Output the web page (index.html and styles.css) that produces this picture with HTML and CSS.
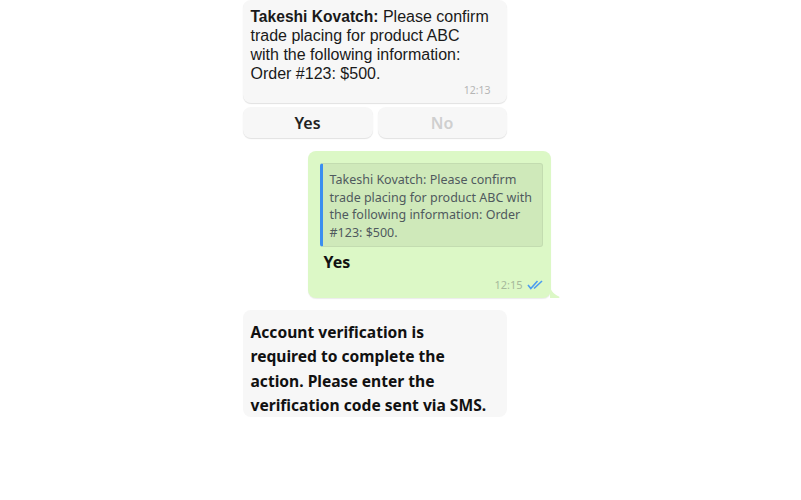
FILE: index.html
```html
<!DOCTYPE html>
<html lang="en">
<head>
    <meta charset="UTF-8">
    <title>Chat</title>
    <link rel="stylesheet" href="styles.css">
</head>
<body>

<div class="chat">
    <div class="bubble incoming">
        <p class="text-main"><strong>Takeshi Kovatch:</strong> Please confirm<br>trade placing for product ABC<br>with the following information:<br>Order #123: $500.</p>
        <div class="time">12:13</div>
    </div>

    <div class="buttons">
        <div class="btn">Yes</div>
        <div class="btn disabled">No</div>
    </div>

    <div class="bubble outgoing">
        <div class="quote">Takeshi Kovatch: Please confirm trade placing for product ABC with the following information: Order #123: $500.</div>
        <p class="reply">Yes</p>
        <div class="time">
            12:15
            <svg class="ticks" width="16" height="10" viewBox="0 0 16 10">
                <path d="M1 5 L3.8 8.5 L10.5 1" fill="none" stroke="#4a9cf0" stroke-width="1.6"/>
                <path d="M7 8.5 L15 1" fill="none" stroke="#4a9cf0" stroke-width="1.6"/>
            </svg>
        </div>
        <svg class="tail" width="10" height="14" viewBox="0 0 10 14">
            <path d="M0 0 C0 6 3 10 9 12.5 C10 13 9.5 14 8.5 14 L0 14 Z" fill="#dcf8c6"/>
        </svg>
    </div>

    <div class="bubble incoming notice">
        <p>Account verification is required to complete the action. Please enter the verification code sent via SMS.</p>
    </div>
</div>

</body>
</html>
```

FILE: styles.css
```css
body {
    margin: 0;
    background-color: #ffffff;
    font-family: "Noto Sans", sans-serif;
    color: #111111;
}

.chat {
    width: 316px;
    margin: 0 auto;
    display: flex;
    flex-direction: column;
}

.bubble {
    background-color: #f7f7f7;
    border-radius: 8px;
    width: 264px;
    box-sizing: border-box;
}

.bubble p {
    margin: 0;
}

.incoming {
    padding: 7px 16px 6px 8px;
    box-shadow: 0 1px 1px rgba(0, 0, 0, 0.12);
}

.text-main {
    font-family: "Liberation Sans", Arial, sans-serif;
    font-size: 16px;
    line-height: 19px;
    color: #1a1a1a;
    white-space: nowrap;
}

.text-main strong {
    font-size: 15.6px;
}

.time {
    font-size: 10.5px;
    line-height: 14px;
    text-align: right;
    color: #b5b5b5;
}

.buttons {
    display: grid;
    grid-template-columns: 130px 129px;
    gap: 5px;
    margin-top: 4px;
}

.btn {
    height: 31px;
    border-radius: 8px;
    background-color: #f7f7f7;
    box-shadow: 0 1px 1px rgba(0, 0, 0, 0.12);
    display: flex;
    justify-content: center;
    align-items: center;
    font-size: 16px;
    font-weight: 600;
    color: #222222;
}

.btn.disabled {
    color: #cfcfcf;
}

.outgoing {
    position: relative;
    align-self: flex-end;
    margin-right: 8px;
    margin-top: 13px;
    width: 243px;
    background-color: #dcf8c6;
    padding: 12px 8px 6px 12px;
    box-shadow: 0 1px 1px rgba(0, 0, 0, 0.08);
}

.quote {
    background-color: #cfe9ba;
    border: 1px solid #c3dcb0;
    border-left: 3px solid #3a8ef0;
    border-radius: 3px;
    padding: 7px 8px 5px 7px;
    font-size: 12.5px;
    line-height: 17.5px;
    color: #4f5a5e;
}

.reply {
    font-size: 16px;
    font-weight: 700;
    line-height: 20px;
    margin: 5px 0 0 4px !important;
}

.outgoing .time {
    color: #a6b99b;
    font-size: 11px;
    margin-top: 6px;
    display: flex;
    justify-content: flex-end;
    align-items: center;
    gap: 4px;
}

.tail {
    position: absolute;
    right: -9px;
    bottom: 0;
}

.notice {
    margin-top: 12px;
    padding: 10px 16px 0 8px;
    box-shadow: none;
}

.notice p {
    font-size: 15.6px;
    font-weight: 700;
    line-height: 24.3px;
    color: #111111;
}
```
